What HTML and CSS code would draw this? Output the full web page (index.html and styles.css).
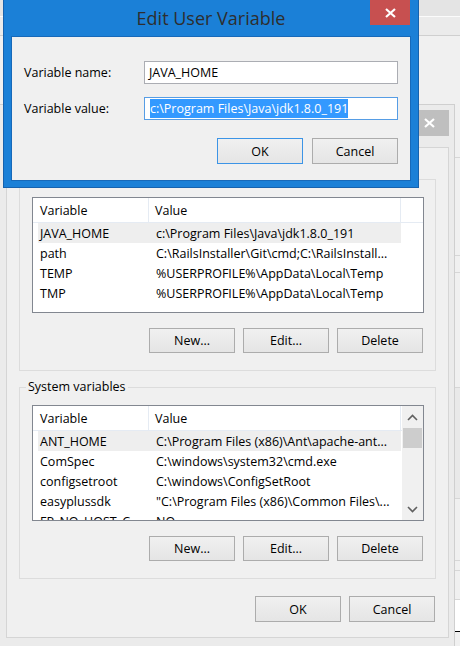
FILE: index.html
```html
<!DOCTYPE html>
<html lang="en">
<head>
<meta charset="utf-8">
<title>Edit User Variable</title>
<link rel="stylesheet" href="styles.css">
</head>
<body>
<div class="desktop">
  <div class="backwin">
    <div class="band b1"></div>
    <div class="band b2"></div>
    <div class="band b3"></div>
    <div class="band b4"></div>
    <div class="band b5"></div>
    <div class="band b6"></div>
    <div class="band b7"></div>
    <div class="band b8"></div>
    <div class="band b9"></div>
    <div class="band b10"></div>
    <div class="band b11"></div>
  </div>

  <div class="envwin">
    <div class="env-title">
      <div class="caption-close inactive">
        <svg width="11" height="10" viewBox="0 0 11 10"><path d="M1 1 L10 9 M10 1 L1 9" stroke="#fff" stroke-width="2.2" fill="none"/></svg>
      </div>
    </div>
    <div class="env-client">
      <div class="group user-group">
        <div class="listview">
          <div class="lv-main">
            <div class="lv-header"><div class="hc hc1">Variable</div><div class="hc hc2">Value</div></div>
            <div class="lv-row selected"><div class="c1">JAVA_HOME</div><div class="c2">c:\Program Files\Java\jdk1.8.0_191</div></div>
            <div class="lv-row"><div class="c1">path</div><div class="c2">C:\RailsInstaller\Git\cmd;C:\RailsInstall...</div></div>
            <div class="lv-row"><div class="c1">TEMP</div><div class="c2">%USERPROFILE%\AppData\Local\Temp</div></div>
            <div class="lv-row"><div class="c1">TMP</div><div class="c2">%USERPROFILE%\AppData\Local\Temp</div></div>
          </div>
        </div>
        <div class="btn-row">
          <button class="btn">New...</button>
          <button class="btn">Edit...</button>
          <button class="btn">Delete</button>
        </div>
      </div>

      <div class="group sys-group">
        <span class="legend">System variables</span>
        <div class="listview">
          <div class="lv-main">
            <div class="lv-header"><div class="hc hc1">Variable</div><div class="hc hc2">Value</div></div>
            <div class="lv-row selected"><div class="c1">ANT_HOME</div><div class="c2">C:\Program Files (x86)\Ant\apache-ant...</div></div>
            <div class="lv-row"><div class="c1">ComSpec</div><div class="c2">C:\windows\system32\cmd.exe</div></div>
            <div class="lv-row"><div class="c1">configsetroot</div><div class="c2">C:\windows\ConfigSetRoot</div></div>
            <div class="lv-row"><div class="c1">easyplussdk</div><div class="c2">"C:\Program Files (x86)\Common Files\...</div></div>
            <div class="lv-row"><div class="c1">FP_NO_HOST_C...</div><div class="c2">NO</div></div>
          </div>
          <div class="scrollbar">
            <div class="sb-arrow">
              <svg width="11" height="7" viewBox="0 0 11 7"><path d="M1 6 L5.5 1.5 L10 6" stroke="#606060" stroke-width="1.6" fill="none"/></svg>
            </div>
            <div class="sb-thumb"></div>
            <div class="sb-track"></div>
            <div class="sb-arrow">
              <svg width="11" height="7" viewBox="0 0 11 7"><path d="M1 1 L5.5 5.5 L10 1" stroke="#606060" stroke-width="1.6" fill="none"/></svg>
            </div>
          </div>
        </div>
        <div class="btn-row">
          <button class="btn">New...</button>
          <button class="btn">Edit...</button>
          <button class="btn">Delete</button>
        </div>
      </div>

      <div class="btn-row dlg-btns">
        <button class="btn tall">OK</button>
        <button class="btn tall">Cancel</button>
      </div>
    </div>
  </div>

  <div class="editwin">
    <div class="edit-title">
      <span></span>
      <span class="title-text">Edit User Variable</span>
      <div class="caption-close active">
        <svg width="11" height="10" viewBox="0 0 11 10"><path d="M1 1 L10 9 M10 1 L1 9" stroke="#fff" stroke-width="2.2" fill="none"/></svg>
      </div>
    </div>
    <div class="edit-client">
      <div class="field-grid">
        <label class="field-label">Variable name:</label>
        <div class="textbox">JAVA_HOME</div>
        <label class="field-label">Variable value:</label>
        <div class="textbox focused"><span class="sel">c:\Program Files\Java\jdk1.8.0_191</span></div>
      </div>
      <div class="btn-row edit-btns">
        <button class="btn tall default">OK</button>
        <button class="btn tall">Cancel</button>
      </div>
    </div>
  </div>
</div>
</body>
</html>
```

FILE: styles.css
```css
* { box-sizing: border-box; }
html, body { margin: 0; padding: 0; }
body {
  width: 460px;
  height: 646px;
  overflow: hidden;
  background: #e8e8e8;
  font-family: "Segoe UI", "Open Sans", sans-serif;
  font-size: 12.5px;
  color: #000;
}
.desktop { position: relative; width: 460px; height: 646px; overflow: hidden; }

/* window behind everything */
.backwin { position: absolute; left: 0; top: 0; width: 460px; height: 646px; background: #f0f0f0; }
.band { border-bottom: 1px solid #d6d6d6; }
.b1 { height: 17px; background: #e4e4e4; border-bottom-color: #fbfbfb; }
.b2 { height: 19px; background: #ebebeb; border-bottom-color: #cfcfcf; }
.b3 { height: 122px; }
.b4 { height: 98px; }
.b5 { height: 17px; }
.b6 { height: 115px; }
.b7 { height: 111px; background: #e9e9e9; }
.b8 { height: 62px; }
.b9 { height: 10px; }
.b10 { height: 29px; }
.b11 { height: 32px; background: #fff; border-bottom-color: #000; }

/* Environment Variables dialog (inactive) */
.envwin {
  position: absolute;
  left: -1px;
  top: 104px;
  width: 456px;
  height: 560px;
  background: #ebebeb;
  border: 1px solid #cfcfcf;
  padding: 0 5px 0 6px;
}
.env-title {
  height: 42px;
  display: flex;
  justify-content: flex-end;
  align-items: flex-start;
  padding-top: 5px;
}
.caption-close {
  display: flex;
  align-items: center;
  justify-content: center;
}
.caption-close.inactive { width: 40px; height: 26px; background: #bfbfbf; }
.caption-close.active { width: 40px; height: 25px; background: #c75050; justify-self: end; }

.env-client {
  height: 491px;
  background: #f0f0f0;
  border: 1px solid #d5d5d5;
  padding: 31px 12px 0 12px;
  display: flex;
  flex-direction: column;
}
.group {
  position: relative;
  height: 192px;
  border: 1px solid #dcdcdc;
  padding: 17px 11px 0 12px;
  display: flex;
  flex-direction: column;
}
.sys-group { margin-top: 16px; }
.legend {
  position: absolute;
  left: 6px;
  top: -9px;
  line-height: 16px;
  padding: 0 2px;
  background: #f0f0f0;
}

.listview {
  height: 116px;
  border: 1px solid #828790;
  background: #fff;
  display: flex;
  overflow: hidden;
}
.lv-main { flex: 1; min-width: 0; overflow: hidden; }
.lv-header {
  height: 25px;
  display: flex;
  border-bottom: 1px solid #e5ebf3;
}
.hc { line-height: 26px; white-space: nowrap; }
.hc1 { width: 116px; padding-left: 7px; border-right: 1px solid #e5ebf3; }
.hc2 { width: 252px; padding-left: 6px; border-right: 1px solid #e5ebf3; }
.lv-row {
  display: flex;
  width: 363px;
  margin-left: 5px;
  height: 20px;
  line-height: 21px;
  white-space: nowrap;
}
.lv-row.selected { background: #eeeeee; }
.c1 { width: 111px; padding-left: 2px; overflow: hidden; }
.c2 { flex: 1; padding-left: 7px; overflow: hidden; }

.scrollbar {
  width: 21px;
  background: #f0f0f0;
  display: flex;
  flex-direction: column;
  align-items: center;
}
.sb-arrow { height: 22px; width: 100%; display: flex; align-items: center; justify-content: center; }
.sb-thumb { width: 19px; height: 20px; background: #cdcdcd; }
.sb-track { flex: 1; }

.btn-row {
  display: flex;
  justify-content: flex-end;
  gap: 8px;
  margin-top: 15px;
  padding-right: 1px;
}
.btn {
  width: 86px;
  height: 25px;
  margin: 0;
  padding: 0;
  font: inherit;
  color: #000;
  border: 1px solid #acacac;
  background: linear-gradient(#f0f0f0, #e5e5e5);
  text-align: center;
}
.btn.tall { height: 26px; }
.btn.default { border-color: #3c94e6; }
.dlg-btns { margin-top: 17px; }

/* Edit User Variable dialog (active) */
.editwin {
  position: absolute;
  left: 3px;
  top: -1px;
  width: 416px;
  height: 189px;
  background: #1b80d7;
  border: 1px solid #1662ae;
  padding: 0 8px 7px 8px;
  display: flex;
  flex-direction: column;
}
.edit-title {
  height: 37px;
  display: grid;
  grid-template-columns: 1fr auto 1fr;
  align-items: start;
}
.title-text {
  font-size: 18px;
  line-height: 37px;
  color: #2e2e2e;
  white-space: nowrap;
}
.edit-client {
  height: 143px;
  background: #f0f0f0;
  box-shadow: 0 0 0 1px #1769b9;
  padding: 24px 12px 0 12px;
}
.field-grid {
  display: grid;
  grid-template-columns: 1fr 254px;
  row-gap: 13px;
  align-items: center;
}
.field-label { line-height: 23px; }
.textbox {
  height: 23px;
  border: 1px solid #abadb3;
  background: #fff;
  padding-left: 4px;
  line-height: 21px;
  white-space: nowrap;
  overflow: hidden;
}
.textbox.focused { border-color: #569de5; padding-left: 5px; }
.sel {
  display: inline-block;
  background: #3399ff;
  color: #fff;
  line-height: 19px;
  margin-top: 1px;
  vertical-align: top;
}
.edit-btns { margin-top: 18px; gap: 9px; padding-right: 0; }
```
